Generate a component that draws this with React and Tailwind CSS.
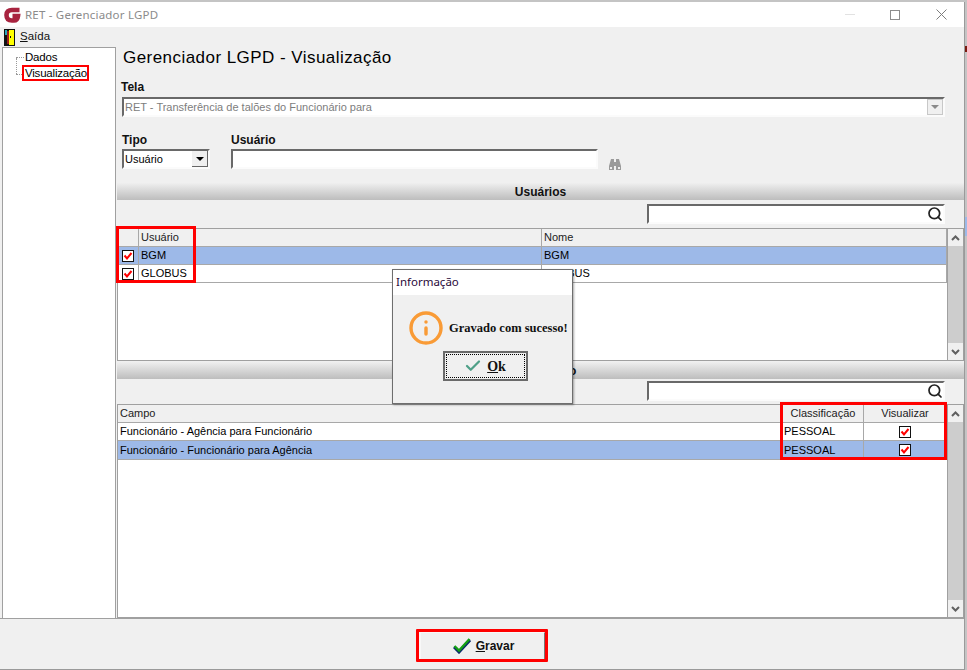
import React from 'react';
import { Check, Info, Search } from 'lucide-react';

const ui = { fontFamily: '"Liberation Sans", Arial, sans-serif' };

const Underlined = ({ first, rest }) => (
  <span>
    <span className="underline">{first}</span>
    {rest}
  </span>
);

const Sunken = ({ className, children }) => (
  <div className={`flex items-center border-2 border-t-[#696969] border-l-[#696969] border-r-[#fbfbfb] border-b-[#fbfbfb] bg-white ${className}`}>
    {children}
  </div>
);

const Band = ({ label }) => (
  <div className="flex h-[17px] w-[847px] items-center justify-center bg-gradient-to-b from-[#efefef] to-[#bdbdbd] text-[12px] font-bold text-[#111]">
    {label}
  </div>
);

const RedCheck = () => (
  <svg width="12" height="12" viewBox="0 0 12 12" className="block">
    <rect x="0.5" y="0.5" width="11" height="11" fill="#fff" stroke="#111" />
    <path d="M2.5 5.5 L5 8.5 L9.5 3" fill="none" stroke="#f00" strokeWidth="2" />
  </svg>
);

const Scrollbar = () => (
  <div className="flex w-[16px] shrink-0 flex-col border-l border-[#a0a0a0] bg-[#f0f0f0]">
    <div className="flex h-[17px] items-center justify-center">
      <svg width="9" height="6" viewBox="0 0 9 6"><path d="M1 5 L4.5 1.5 L8 5" fill="none" stroke="#606060" strokeWidth="2" /></svg>
    </div>
    <div className="flex-1 bg-[#cdcdcd]" />
    <div className="flex h-[17px] items-center justify-center">
      <svg width="9" height="6" viewBox="0 0 9 6"><path d="M1 1 L4.5 4.5 L8 1" fill="none" stroke="#606060" strokeWidth="2" /></svg>
    </div>
  </div>
);

const SearchBox = () => (
  <div className="flex justify-end pr-[19px]">
    <Sunken className="h-[20px] w-[298px] justify-end">
      <Search size={16} strokeWidth={2.6} className="text-[#222]" />
    </Sunken>
  </div>
);

const HeaderCell = ({ className, children }) => (
  <div className={`flex items-center border-r border-b border-[#a8a8a8] bg-[#f0f0f0] text-[11px] text-[#222] ${className}`}>
    {children}
  </div>
);

const Cell = ({ className, children }) => (
  <div className={`flex items-center border-r border-b border-[#a8a8a8] text-[11px] text-black ${className}`}>
    {children}
  </div>
);

const users = [
  { login: 'BGM', name: 'BGM', selected: true },
  { login: 'GLOBUS', name: 'GLOBUS', selected: false },
];

const fields = [
  { field: 'Funcionário - Agência para Funcionário', kind: 'PESSOAL', selected: false },
  { field: 'Funcionário - Funcionário para Agência', kind: 'PESSOAL', selected: true },
];

const App = () => {
  return (
    <div className="relative h-[670px] w-[967px] overflow-hidden bg-[#c4c4c4] pt-[2px]" style={ui}>
      {/* Bits of the desktop behind the window */}
      <div className="absolute right-0 top-[217px] h-[19px] w-[2px] bg-[#9db9e8]" />
      <div className="absolute right-0 top-[46px] h-[6px] w-[2px] bg-[#7a1a10]" />

      <div className="relative flex h-[668px] w-[965px] flex-col border-r border-b border-[#9a9a9a] bg-[#f0f0f0]">
        {/* Title bar */}
        <div className="flex h-[25px] shrink-0 items-center bg-white pl-[4px]">
          <svg width="17" height="16" viewBox="0 0 17 16" className="shrink-0">
            <path d="M15.5 3 H8 Q2.5 3 2.5 8 Q2.5 13.5 8 13.5 H10 Q13.5 13.5 14 9 H8.5" fill="none" stroke="#a8233f" strokeWidth="4.6" />
          </svg>
          <span className="ml-[4px] text-[11.5px] tracking-[0.2px] text-[#8b8b8b]" style={{ fontFamily: '"Noto Sans", sans-serif' }}>RET - Gerenciador LGPD</span>
          <div className="ml-auto flex items-center">
            <div className="mr-[35px] h-px w-[10px] bg-[#e2e2e2]" />
            <div className="mr-[36px] h-[10px] w-[10px] border border-[#8c8c8c]" />
            <svg width="11" height="11" viewBox="0 0 11 11" className="mr-[17px]"><path d="M0.5 0.5 L10.5 10.5 M10.5 0.5 L0.5 10.5" stroke="#7d7d7d" /></svg>
          </div>
        </div>

        {/* Menu */}
        <div className="flex h-[20px] shrink-0 items-center pl-[4px] text-[11.5px] text-[#111]">
          <svg width="11" height="17" viewBox="0 0 11 17" className="shrink-0">
            <rect width="11" height="17" fill="#111" />
            <rect x="5" y="1" width="5" height="15" fill="#ff0" />
            <rect x="1" y="1" width="2" height="5" fill="#2aa6b8" />
            <rect x="3" y="2" width="2" height="13" fill="#9c1c1c" />
            <rect x="6" y="7" width="1" height="2" fill="#111" />
          </svg>
          <span className="ml-[5px]"><Underlined first="S" rest="aída" /></span>
        </div>

        <div className="flex min-h-0 flex-1 flex-col">
          <div className="flex h-[571px] shrink-0">
            {/* Tree */}
            <div className="ml-[2px] h-full w-[114px] shrink-0 border-t border-l border-r border-[#a0a0a0] bg-white pl-[22px] pt-[2px] text-[11.5px] tracking-[-0.2px] text-black">
              <div className="relative flex h-[16px] items-center">
                <span className="absolute left-[-9px] top-[7px] w-[8px] border-t border-dotted border-[#999]" />
                Dados
              </div>
              <div className="relative flex h-[16px] items-center">
                <span className="absolute left-[-9px] top-[-8px] h-[16px] border-l border-dotted border-[#999]" />
                <span className="absolute left-[-9px] top-[8px] w-[8px] border-t border-dotted border-[#999]" />
                Visualização
              </div>
            </div>

            {/* Main panel */}
            <div className="flex min-w-0 flex-1 flex-col pl-[1px]">
              <h1 className="ml-[6px] flex h-[20px] items-center text-[17px] leading-none tracking-[0.45px] text-black">Gerenciador LGPD - Visualização</h1>

              <label className="ml-[4px] mt-[13px] block h-[15px] text-[12px] font-bold leading-[15px] text-[#111]">Tela</label>
              <Sunken className="ml-[5px] mt-[2px] h-[20px] w-[823px] justify-between">
                <span className="pl-[1px] text-[11px] text-[#7d7d7d]">RET - Transferência de talões do Funcionário para</span>
                <div className="flex h-[16px] w-[16px] items-center justify-center border border-[#c8c8c8] bg-[#f0f0f0]">
                  <div className="border-x-[4px] border-t-[4px] border-x-transparent border-t-[#8a8a8a]" />
                </div>
              </Sunken>

              <div className="ml-[5px] mt-[16px] flex gap-[21px]">
                <div className="flex flex-col">
                  <label className="h-[16px] text-[12px] font-bold leading-[15px] text-[#111]">Tipo</label>
                  <Sunken className="h-[20px] w-[88px] justify-between">
                    <span className="pl-[1px] text-[11px] text-black">Usuário</span>
                    <div className="flex h-[16px] w-[16px] items-center justify-center border-r border-b border-[#666] bg-[#f0f0f0]">
                      <div className="border-x-[4px] border-t-[4px] border-x-transparent border-t-black" />
                    </div>
                  </Sunken>
                </div>
                <div className="flex flex-col">
                  <label className="h-[16px] text-[12px] font-bold leading-[15px] text-[#111]">Usuário</label>
                  <div className="flex items-end">
                    <Sunken className="h-[20px] w-[367px]" />
                    <svg width="12" height="11" viewBox="0 0 12 11" className="-mb-[1px] ml-[11px]">
                      <path d="M2 0 H5 V3 H7 V0 H10 L12 7 V11 H7 V7 H5 V11 H0 V7 Z" fill="#9a9a9a" />
                      <rect x="1" y="8" width="2" height="2" fill="#eee" />
                      <rect x="9" y="8" width="2" height="2" fill="#eee" />
                    </svg>
                  </div>
                </div>
              </div>

              <div className="mt-[14px]"><Band label="Usuários" /></div>
              <div className="mt-[4px]"><SearchBox /></div>

              {/* Users grid */}
              <div className="mt-[4px] flex h-[133px] w-[847px] border border-[#a0a0a0] bg-white">
                <div className="grid flex-1 grid-cols-[21px_403px_1fr] grid-rows-[18px_18px_18px_1fr]">
                  <HeaderCell />
                  <HeaderCell className="pl-[2px]">Usuário</HeaderCell>
                  <HeaderCell className="pl-[2px]">Nome</HeaderCell>
                  {users.map((u) => (
                    <React.Fragment key={u.login}>
                      <Cell className={`justify-center ${u.selected ? 'bg-[#9db9e8]' : ''}`}><RedCheck /></Cell>
                      <Cell className={`pl-[2px] ${u.selected ? 'bg-[#9db9e8]' : ''}`}>{u.login}</Cell>
                      <Cell className={`pl-[2px] ${u.selected ? 'bg-[#9db9e8]' : ''}`}>{u.name}</Cell>
                    </React.Fragment>
                  ))}
                </div>
                <Scrollbar />
              </div>

              <div className="mt-[1px]"><Band label="Visualização" /></div>
              <div className="mt-[2px]"><SearchBox /></div>

              {/* Fields grid */}
              <div className="mt-[3px] flex min-h-0 w-[847px] flex-1 border border-[#a0a0a0] bg-white">
                <div className="grid flex-1 grid-cols-[665px_81px_1fr] grid-rows-[18px_18px_19px_1fr]">
                  <HeaderCell className="pl-[2px]">Campo</HeaderCell>
                  <HeaderCell className="justify-center">Classificação</HeaderCell>
                  <HeaderCell className="justify-center">Visualizar</HeaderCell>
                  {fields.map((f) => (
                    <React.Fragment key={f.field}>
                      <Cell className={`pl-[2px] ${f.selected ? 'bg-[#9db9e8]' : ''}`}>{f.field}</Cell>
                      <Cell className={`pl-[1px] ${f.selected ? 'bg-[#9db9e8]' : ''}`}>{f.kind}</Cell>
                      <Cell className={`justify-center ${f.selected ? 'bg-[#9db9e8]' : ''}`}><RedCheck /></Cell>
                    </React.Fragment>
                  ))}
                </div>
                <Scrollbar />
              </div>
            </div>
          </div>

          {/* Footer */}
          <div className="flex flex-1 items-start justify-center border-t border-[#a0a0a0] pt-[12px]">
            <button className="flex h-[30px] w-[127px] items-center justify-center gap-[5px] border-2 border-t-[#f8f8f8] border-l-[#f8f8f8] border-r-[#777] border-b-[#777] bg-[#f0f0f0] pl-[3px] text-[12px] font-bold text-[#111]">
              <svg width="18" height="16" viewBox="0 0 18 16">
                <path d="M1 9 L6 14 L17 2" fill="none" stroke="#0a2a6a" strokeWidth="3" />
                <path d="M1.5 8 L6 12.5 L16.5 1" fill="none" stroke="#14a014" strokeWidth="2.4" />
              </svg>
              <Underlined first="G" rest="ravar" />
            </button>
          </div>
        </div>
      </div>

      {/* Red marks drawn over the screenshot */}
      <div className="absolute left-[22px] top-[65px] h-[16px] w-[67px] border-[2px] border-[#f00]" />
      <div className="absolute left-[116px] top-[226px] h-[57px] w-[80px] border-[3px] border-[#f00]" />
      <div className="absolute left-[780px] top-[402px] h-[58px] w-[167px] border-[3px] border-[#f00]" />
      <div className="absolute left-[416px] top-[629px] h-[33px] w-[132px] rounded-[1px] border-[3px] border-[#f00]" />

      {/* Message dialog */}
      <div className="absolute left-[392px] top-[269px] flex h-[135px] w-[181px] flex-col border border-[#6e6e6e] bg-[#f0f0f0] shadow-[1px_1px_2px_rgba(0,0,0,0.35)]">
        <div className="flex h-[25px] shrink-0 items-center bg-white pb-[2px] pl-[3px] text-[11.5px] text-[#2a0a3a]" style={{ fontFamily: '"Noto Sans", sans-serif' }}>Informação</div>
        <div className="mt-[15px] flex items-center pl-[16px]">
          <Info size={36} strokeWidth={2.3} className="-ml-[1px] shrink-0 text-[#f99b36]" />
          <span className="ml-[5px] whitespace-nowrap text-[12.5px] font-bold text-[#111]" style={{ fontFamily: '"Liberation Serif", serif' }}>Gravado com sucesso!</span>
        </div>
        <div className="mt-[5px] flex justify-center pl-[5px]">
          <button className="flex h-[30px] w-[85px] items-center justify-center border-2 border-[#6a6a6a] bg-[#f0f0f0] p-[1px]">
            <span className="flex h-full w-full items-center justify-center gap-[5px] border border-dotted border-black text-[14px] font-bold text-[#111]" style={{ fontFamily: '"Liberation Serif", serif' }}>
              <Check size={18} strokeWidth={3} className="text-[#4fa088]" />
              <Underlined first="O" rest="k" />
            </span>
          </button>
        </div>
      </div>
    </div>
  );
};

export default App;
